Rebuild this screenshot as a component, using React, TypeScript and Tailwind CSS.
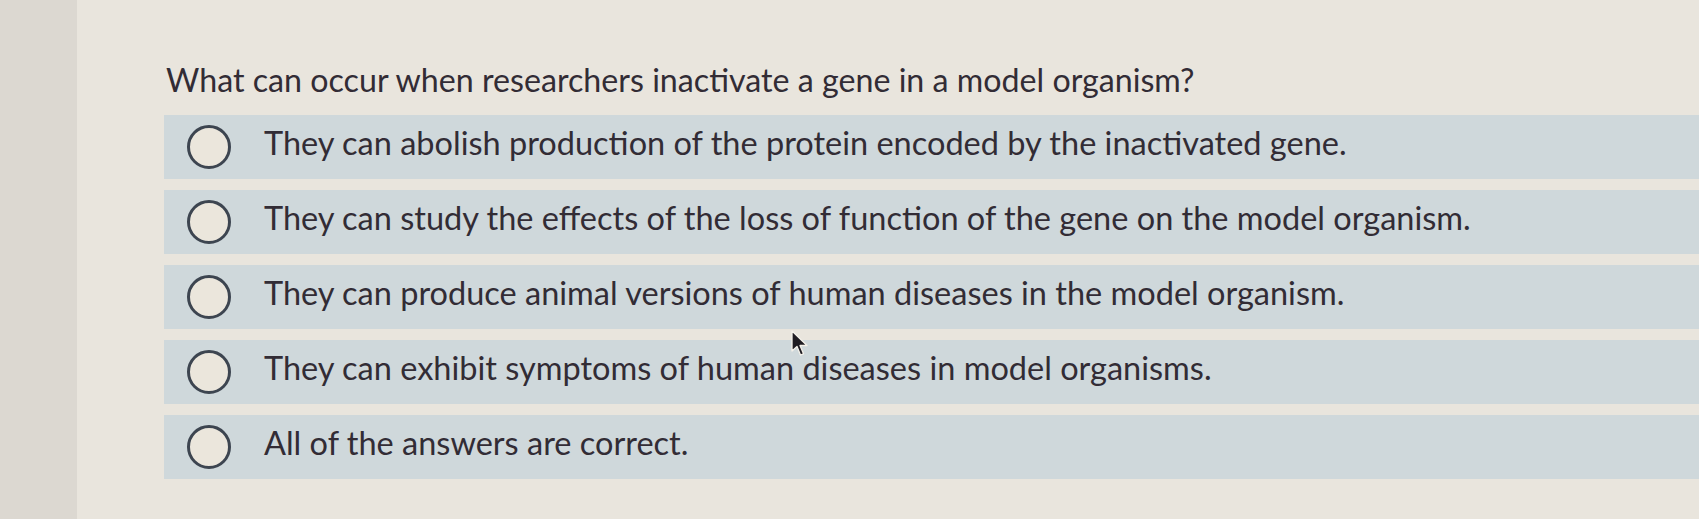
const options = [
  'They can abolish production of the protein encoded by the inactivated gene.',
  'They can study the effects of the loss of function of the gene on the model organism.',
  'They can produce animal versions of human diseases in the model organism.',
  'They can exhibit symptoms of human diseases in model organisms.',
  'All of the answers are correct.',
];

export default function App() {
  return (
    <div className="relative flex h-[519px] w-[1699px] overflow-hidden bg-[#e9e5dd] font-['Lato',sans-serif] text-[#322c35]">
      <div className="w-[77px] shrink-0 bg-[#dcd8d1]" />
      <div className="flex-1 pt-[60px] pl-[87px]">
        <h1 className="text-[32.2px] leading-[40px] mb-[15px] ml-[2px]">
          What can occur when researchers inactivate a gene in a model organism?
        </h1>
        <div className="flex flex-col gap-[11px]">
          {options.map((opt) => (
            <label key={opt} className="flex h-[64px] items-center bg-[#cfd8db] cursor-pointer">
              <span className="ml-[23px] h-[44px] w-[44px] shrink-0 rounded-full border-[3px] border-[#3d4550] bg-[#ebe6dc]" />
              <span className="ml-[33px] pb-[8px] text-[32.5px] leading-none">{opt}</span>
            </label>
          ))}
        </div>
      </div>
      {/* mouse pointer caught in the shot */}
      <svg className="absolute left-[790px] top-[330px]" width="20" height="28" viewBox="0 0 20 28">
        <path d="M2 1 L2 21 L7 16.5 L10.5 25 L13.5 23.8 L10 15.5 L17 15.5 Z" fill="#1f1c22" stroke="#f4f1ea" strokeWidth="1.3" strokeLinejoin="round" />
      </svg>
    </div>
  );
}
